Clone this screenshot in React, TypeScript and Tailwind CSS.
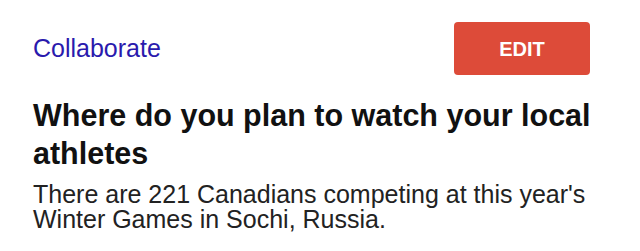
import React from "react";

export default function App() {
  return (
    <div className="w-[640px] h-[251px] bg-white overflow-hidden font-['Liberation_Sans',Arial,sans-serif]">
      <div className="pl-[33px] pr-[20px] pt-[22px]">
        <div className="flex items-center justify-between h-[53px] pr-[30px]">
          <a className="text-[25px] leading-[29px] text-[#2a1aad]">Collaborate</a>
          <button className="w-[136px] h-[53px] rounded-[4px] bg-[#dd4b39] text-white font-bold text-[20px]">
            EDIT
          </button>
        </div>
        <h1 className="mt-[21px] text-[30.5px] leading-[38px] font-bold text-[#111]">
          Where do you plan to watch your local athletes
        </h1>
        <p className="mt-[10px] text-[25px] leading-[25px] text-[#222]">
          There are 221 Canadians competing at this year's Winter Games in Sochi, Russia.
        </p>
      </div>
    </div>
  );
}
